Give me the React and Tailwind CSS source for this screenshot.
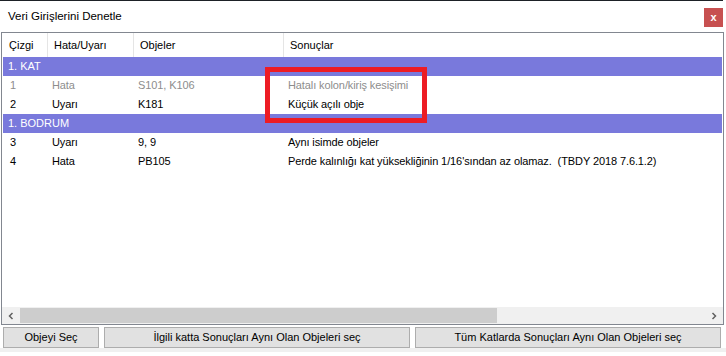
import React from "react";

const groups = [
  {
    name: "1. KAT",
    rows: [
      { no: "1", type: "Hata", objs: "S101, K106", result: "Hatalı kolon/kiriş kesişimi", muted: true },
      { no: "2", type: "Uyarı", objs: "K181", result: "Küçük açılı obje" },
    ],
  },
  {
    name: "1. BODRUM",
    rows: [
      { no: "3", type: "Uyarı", objs: "9, 9", result: "Aynı isimde objeler" },
      {
        no: "4",
        type: "Hata",
        objs: "PB105",
        result: "Perde kalınlığı kat yüksekliğinin 1/16'sından az olamaz.  (TBDY 2018 7.6.1.2)",
      },
    ],
  },
];

function HeaderCell({ w, children, last }) {
  return (
    <div className={`${w} h-full flex items-center pl-[6px] ${last ? "" : "border-r border-[#e5e5e5]"}`}>
      {children}
    </div>
  );
}

function Row({ row }) {
  return (
    <div className={`flex h-[19px] items-center whitespace-pre tracking-[-0.1px] ${row.muted ? "text-[#8d8d8d]" : "text-black"}`}>
      <div className="w-[45px] pl-[7px]">{row.no}</div>
      <div className="w-[86px] pl-[4px]">{row.type}</div>
      <div className="w-[150px] pl-[4px]">{row.objs}</div>
      <div className="flex-1 pl-[4px]">{row.result}</div>
    </div>
  );
}

export default function App() {
  return (
    <div className="w-[726px] h-[356px] bg-white flex flex-col text-[11px] text-black overflow-hidden" style={{ fontFamily: '"Liberation Sans", Arial, sans-serif' }}>
      <div className="h-[1px] w-[723px] bg-[#1d2126]" />

      {/* title bar */}
      <div className="h-[31px] flex items-center justify-between pl-[8px] pr-[3px]">
        <span className="text-[11.5px]">Veri Girişlerini Denetle</span>
        <button className="w-[19px] h-[19px] bg-[#c75050] text-white text-[11px] font-bold leading-none flex items-center justify-center mt-[1px]">
          x
        </button>
      </div>

      {/* list view */}
      <div className="ml-[1px] w-[723px] h-[293px] border border-[#828790] flex flex-col">
        <div className="relative flex-1 pl-[1px] pr-[1px]">
          <div className="flex h-[24px]">
            <HeaderCell w="w-[45px]">Çizgi</HeaderCell>
            <HeaderCell w="w-[86px]">Hata/Uyarı</HeaderCell>
            <HeaderCell w="w-[150px]">Objeler</HeaderCell>
            <HeaderCell w="flex-1" last>Sonuçlar</HeaderCell>
          </div>
          {groups.map((g) => (
            <div key={g.name}>
              <div className="h-[19px] bg-[#7979dc] text-white flex items-center pl-[5px]">{g.name}</div>
              {g.rows.map((r) => (
                <Row key={r.no} row={r} />
              ))}
            </div>
          ))}

          {/* red highlight frame */}
          <div className="absolute left-[263px] top-[34px] w-[162px] h-[56px] border-[5px] border-[#ed1c24]" />
        </div>

        {/* horizontal scrollbar */}
        <div className="h-[17px] flex bg-[#f0f0f0]">
          <div className="w-[18px] flex items-center justify-center">
            <svg width="6" height="8" viewBox="0 0 6 8">
              <path d="M4.5 1 L1.5 4 L4.5 7" fill="none" stroke="#606060" strokeWidth="1.5" />
            </svg>
          </div>
          <div className="flex-1 py-[1px]">
            <div className="w-[477px] h-full bg-[#cdcdcd]" />
          </div>
          <div className="w-[18px] flex items-center justify-center">
            <svg width="6" height="8" viewBox="0 0 6 8">
              <path d="M1.5 1 L4.5 4 L1.5 7" fill="none" stroke="#606060" strokeWidth="1.5" />
            </svg>
          </div>
        </div>
      </div>

      {/* buttons */}
      <div className="flex gap-[5px] pl-[3px] mt-[2px] h-[21px]">
        <button className="w-[96px] h-full bg-[#e1e1e1] border border-[#adadad]">Objeyi Seç</button>
        <button className="w-[306px] h-full bg-[#e1e1e1] border border-[#adadad]">İlgili katta Sonuçları Aynı Olan Objeleri seç</button>
        <button className="w-[306px] h-full bg-[#e1e1e1] border border-[#adadad]">Tüm Katlarda Sonuçları Aynı Olan Objeleri seç</button>
      </div>
      <div className="h-[4px] bg-[#f0f0f0]" />
    </div>
  );
}
